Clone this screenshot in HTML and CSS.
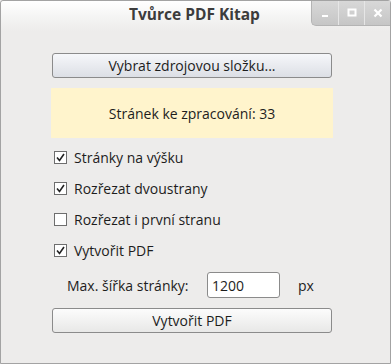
FILE: index.html
```html
<!DOCTYPE html>
<html lang="cs">
<head>
<meta charset="utf-8">
<title>Tvůrce PDF Kitap</title>
<link rel="stylesheet" href="styles.css">
</head>
<body>
<div class="window">
  <div class="titlebar">
    <span class="title">Tvůrce PDF Kitap</span>
    <div class="wm">
      <span class="wm-btn"><svg width="10" height="10" viewBox="0 0 10 10"><rect x="2" y="7" width="6" height="2" fill="#fff"/></svg></span>
      <span class="wm-btn"><svg width="10" height="10" viewBox="0 0 10 10"><rect x="1.5" y="1.5" width="7" height="6" fill="none" stroke="#fff" stroke-width="2"/></svg></span>
      <span class="wm-btn"><svg width="10" height="10" viewBox="0 0 10 10"><path d="M1.5 1.5 L8.5 8.5 M8.5 1.5 L1.5 8.5" stroke="#fff" stroke-width="2.2"/></svg></span>
    </div>
  </div>
  <div class="content">
    <button class="btn btn-focus">Vybrat zdrojovou složku...</button>
    <div class="info">Stránek ke zpracování: 33</div>
    <div class="checks">
      <label class="check"><span class="box"><svg width="11" height="11" viewBox="0 0 11 11"><path d="M2 5.5 L4.5 8.5 L9 2" fill="none" stroke="#222" stroke-width="1.6"/></svg></span>Stránky na výšku</label>
      <label class="check"><span class="box"><svg width="11" height="11" viewBox="0 0 11 11"><path d="M2 5.5 L4.5 8.5 L9 2" fill="none" stroke="#222" stroke-width="1.6"/></svg></span>Rozřezat dvoustrany</label>
      <label class="check"><span class="box"></span>Rozřezat i první stranu</label>
      <label class="check"><span class="box"><svg width="11" height="11" viewBox="0 0 11 11"><path d="M2 5.5 L4.5 8.5 L9 2" fill="none" stroke="#222" stroke-width="1.6"/></svg></span>Vytvořit PDF</label>
    </div>
    <div class="width-row">
      <span class="lbl">Max. šířka stránky:</span>
      <span class="field">1200</span>
      <span class="unit">px</span>
    </div>
    <button class="btn">Vytvořit PDF</button>
  </div>
</div>
</body>
</html>
```
FILE: styles.css
```css
* { box-sizing: border-box; }
html, body { margin: 0; padding: 0; }
body {
  width: 391px;
  height: 364px;
  font-family: "Open Sans", "Noto Sans", sans-serif;
  font-size: 14px;
  color: #1d1d1d;
  background: #edeceb;
}
.window {
  width: 391px;
  height: 364px;
  border: 1px solid #a3a3a3;
  border-radius: 3px 3px 0 0;
  background: #edeceb;
  display: flex;
  flex-direction: column;
}
.titlebar {
  height: 30px;
  flex: none;
  position: relative;
  background: linear-gradient(#ffffff, #f3f3f2 60%, #edeceb);
  border-radius: 3px 3px 0 0;
}
.title {
  position: absolute;
  left: 0;
  right: 0;
  top: 2px;
  text-align: center;
  padding-right: 2px;
  font-weight: bold;
  font-size: 15.5px;
  color: #3c3c3c;
}
.wm {
  position: absolute;
  right: 0;
  top: 0;
  display: flex;
  height: 25px;
  border-left: 1px solid #b4b4b4;
  border-bottom: 1px solid #b4b4b4;
  border-radius: 0 0 0 5px;
  overflow: hidden;
  background: linear-gradient(#d8d8d8, #c6c6c6);
}
.wm-btn {
  width: 26px;
  height: 24px;
  display: flex;
  align-items: center;
  justify-content: center;
  border-left: 1px solid #e6e6e6;
}
.wm-btn:first-child { border-left: none; }
.content {
  padding: 22px 57px 0 50px;
  display: flex;
  flex-direction: column;
}
.btn {
  font: inherit;
  color: #1d1d1d;
  height: 25px;
  margin: 0 1px;
  border: 1px solid #8b8b8b;
  border-radius: 3px;
  background: linear-gradient(#fcfcfc, #e8e8e7);
  padding: 0;
}
.btn-focus {
  background: linear-gradient(#f6f7fa, #dcdfe5);
}
.info {
  margin-top: 10px;
  height: 50px;
  background: #fff4cc;
  display: flex;
  align-items: center;
  justify-content: center;
}
.checks {
  margin-top: 4px;
  display: flex;
  flex-direction: column;
}
.check {
  height: 31px;
  display: flex;
  align-items: center;
  padding-left: 3px;
}
.box {
  width: 13px;
  height: 13px;
  border: 1px solid #6e6e6e;
  background: #fff;
  margin-right: 7px;
  display: flex;
  align-items: center;
  justify-content: center;
}
.width-row {
  margin-top: 6px;
  height: 26px;
  display: flex;
  align-items: center;
  padding-left: 16px;
}
.lbl { width: 140px; }
.field {
  width: 73px;
  height: 26px;
  border: 1px solid #8b8b8b;
  border-radius: 3px;
  background: #fff;
  padding-left: 4px;
  display: flex;
  align-items: center;
}
.unit { margin-left: 18px; }
.width-row + .btn { margin-top: 10px; }
```
